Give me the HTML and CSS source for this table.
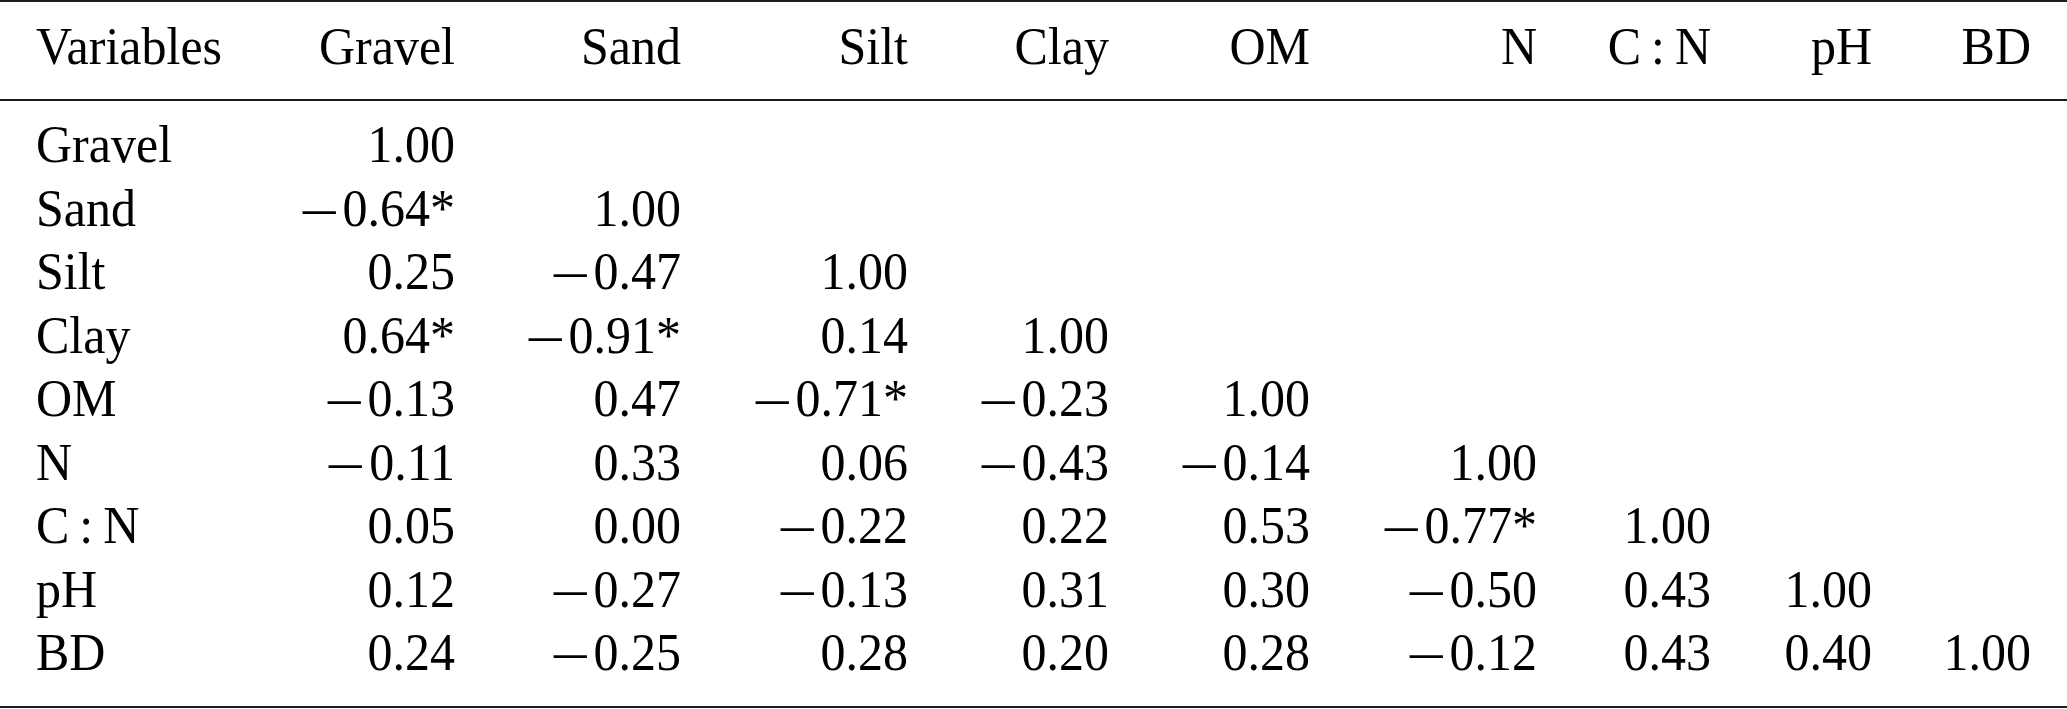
FILE: index.html
```html
<!DOCTYPE html>
<html lang="en">
<head>
<meta charset="utf-8">
<title>Correlation matrix</title>
<link rel="stylesheet" href="styles.css">
</head>
<body>
<table class="corr">
  <thead>
    <tr>
      <th><span class="t">Variables</span></th>
      <th><span class="t">Gravel</span></th>
      <th><span class="t">Sand</span></th>
      <th><span class="t">Silt</span></th>
      <th><span class="t">Clay</span></th>
      <th><span class="t">OM</span></th>
      <th><span class="t">N</span></th>
      <th><span class="t">C&thinsp;:&thinsp;N</span></th>
      <th><span class="t">pH</span></th>
      <th><span class="t">BD</span></th>
    </tr>
  </thead>
  <tbody>
    <tr>
      <td><span class="t">Gravel</span></td>
      <td><span class="t">1.00</span></td>
      <td></td><td></td><td></td><td></td><td></td><td></td><td></td><td></td>
    </tr>
    <tr>
      <td><span class="t">Sand</span></td>
      <td><span class="t"><span class="m">–</span>0.64*</span></td>
      <td><span class="t">1.00</span></td>
      <td></td><td></td><td></td><td></td><td></td><td></td><td></td>
    </tr>
    <tr>
      <td><span class="t">Silt</span></td>
      <td><span class="t">0.25</span></td>
      <td><span class="t"><span class="m">–</span>0.47</span></td>
      <td><span class="t">1.00</span></td>
      <td></td><td></td><td></td><td></td><td></td><td></td>
    </tr>
    <tr>
      <td><span class="t">Clay</span></td>
      <td><span class="t">0.64*</span></td>
      <td><span class="t"><span class="m">–</span>0.91*</span></td>
      <td><span class="t">0.14</span></td>
      <td><span class="t">1.00</span></td>
      <td></td><td></td><td></td><td></td><td></td>
    </tr>
    <tr>
      <td><span class="t">OM</span></td>
      <td><span class="t"><span class="m">–</span>0.13</span></td>
      <td><span class="t">0.47</span></td>
      <td><span class="t"><span class="m">–</span>0.71*</span></td>
      <td><span class="t"><span class="m">–</span>0.23</span></td>
      <td><span class="t">1.00</span></td>
      <td></td><td></td><td></td><td></td>
    </tr>
    <tr>
      <td><span class="t">N</span></td>
      <td><span class="t"><span class="m">–</span>0.11</span></td>
      <td><span class="t">0.33</span></td>
      <td><span class="t">0.06</span></td>
      <td><span class="t"><span class="m">–</span>0.43</span></td>
      <td><span class="t"><span class="m">–</span>0.14</span></td>
      <td><span class="t">1.00</span></td>
      <td></td><td></td><td></td>
    </tr>
    <tr>
      <td><span class="t">C&thinsp;:&thinsp;N</span></td>
      <td><span class="t">0.05</span></td>
      <td><span class="t">0.00</span></td>
      <td><span class="t"><span class="m">–</span>0.22</span></td>
      <td><span class="t">0.22</span></td>
      <td><span class="t">0.53</span></td>
      <td><span class="t"><span class="m">–</span>0.77*</span></td>
      <td><span class="t">1.00</span></td>
      <td></td><td></td>
    </tr>
    <tr>
      <td><span class="t">pH</span></td>
      <td><span class="t">0.12</span></td>
      <td><span class="t"><span class="m">–</span>0.27</span></td>
      <td><span class="t"><span class="m">–</span>0.13</span></td>
      <td><span class="t">0.31</span></td>
      <td><span class="t">0.30</span></td>
      <td><span class="t"><span class="m">–</span>0.50</span></td>
      <td><span class="t">0.43</span></td>
      <td><span class="t">1.00</span></td>
      <td></td>
    </tr>
    <tr>
      <td><span class="t">BD</span></td>
      <td><span class="t">0.24</span></td>
      <td><span class="t"><span class="m">–</span>0.25</span></td>
      <td><span class="t">0.28</span></td>
      <td><span class="t">0.20</span></td>
      <td><span class="t">0.28</span></td>
      <td><span class="t"><span class="m">–</span>0.12</span></td>
      <td><span class="t">0.43</span></td>
      <td><span class="t">0.40</span></td>
      <td><span class="t">1.00</span></td>
    </tr>
  </tbody>
</table>
</body>
</html>
```
FILE: styles.css
```css
html, body {
  margin: 0;
  padding: 0;
  background: #ffffff;
}

.corr {
  width: 2067px;
  table-layout: fixed;
  border-collapse: separate;
  border-spacing: 0;
  font-family: "Liberation Serif", "Times New Roman", serif;
  font-size: 50px;
  line-height: 63.5px;
  color: #000;
}

.corr th,
.corr td {
  padding: 0;
  font-weight: normal;
  text-align: right;
  white-space: nowrap;
  vertical-align: baseline;
}

.corr th:first-child,
.corr td:first-child {
  text-align: left;
  padding-left: 36px;
}

.corr th:last-child,
.corr td:last-child {
  padding-right: 36px;
}

/* column widths: right edges at 455, 681, 908, 1109, 1310, 1537, 1711, 1872, 2031 */
.corr th:nth-child(1)  { width: 224px; }
.corr th:nth-child(2)  { width: 195px; }
.corr th:nth-child(3)  { width: 226px; }
.corr th:nth-child(4)  { width: 227px; }
.corr th:nth-child(5)  { width: 201px; }
.corr th:nth-child(6)  { width: 201px; }
.corr th:nth-child(7)  { width: 227px; }
.corr th:nth-child(8)  { width: 174px; }
.corr th:nth-child(9)  { width: 161px; }
.corr th:nth-child(10) { width: 159px; }

.corr thead th {
  border-top: 2px solid #1c1c1c;
  border-bottom: 2px solid #1c1c1c;
  padding-top: 14.4px;
  padding-bottom: 19px;
}

.corr tbody tr:first-child td {
  padding-top: 13.4px;
}

.corr tbody tr:last-child td {
  padding-bottom: 20px;
  border-bottom: 2.5px solid #1c1c1c;
}

.t {
  display: inline-block;
  transform: scaleY(1.05);
  transform-origin: 50% 48.6px;
}

.m {
  display: inline-block;
  transform: scaleX(1.3) translateY(-1px);
  transform-origin: 0 50%;
  margin-right: 0.3em;
}
```
